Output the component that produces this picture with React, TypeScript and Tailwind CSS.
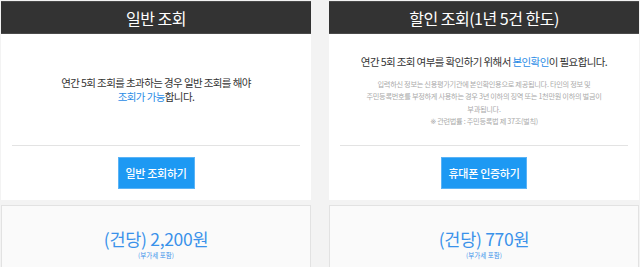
import React from 'react';

type Plan = {
  id: number;
  title: string;
  button: string;
  price: string;
  buttonWidth: string;
};

const plans: Plan[] = [
  { id: 1, title: '일반 조회', button: '일반 조회하기', price: '(건당) 2,200원', buttonWidth: 'w-[77px]' },
  { id: 2, title: '할인 조회(1년 5건 한도)', button: '휴대폰 인증하기', price: '(건당) 770원', buttonWidth: 'w-[86px]' },
];

const GeneralNotice = () => (
  <p className="text-center text-[10.5px] leading-[14px] tracking-[-0.6px] text-[#333]">
    연간 5회 조회를 초과하는 경우 일반 조회를 해야
    <br />
    <span className="text-[#2a8ce6]">조회가 가능</span>합니다.
  </p>
);

const DiscountNotice = () => (
  <div className="flex flex-col items-center pt-[4px] text-center">
    <p className="text-[10.5px] leading-[14px] tracking-[-0.6px] text-[#333]">
      연간 5회 조회 여부를 확인하기 위해서 <span className="text-[#2a8ce6]">본인확인</span>이 필요합니다.
    </p>
    <p className="mt-[9px] text-[7.2px] leading-[12.5px] tracking-[-0.3px] text-[#aaa]">
      입력하신 정보는 신용평가기관에 본인확인용으로 제공됩니다. 타인의 정보 및
      <br />
      주민등록번호를 부정하게 사용하는 경우 3년 이하의 징역 또는 1천만원 이하의 벌금이
      <br />
      부과됩니다.
      <br />
      <span className="font-['DejaVu_Sans',sans-serif] text-[#aaa]">※</span> 관련법률 : 주민등록법 제 37조(벌칙)
    </p>
  </div>
);

const PlanCard = ({ plan }: { plan: Plan }) => (
  <div className="flex flex-col">
    <div className="flex h-[33px] items-center justify-center border-y border-[#4a4a4a] bg-[#333]">
      <h2 className="text-[16px] font-normal tracking-[-0.5px] text-white">{plan.title}</h2>
    </div>
    <div className="bg-white px-[11px]">
      <div className="flex h-[112px] items-center justify-center border-b border-[#e3e3e3]">
        {plan.id === 1 ? <GeneralNotice /> : <DiscountNotice />}
      </div>
      <div className="flex justify-center py-[11px]">
        <button className={`h-[32px] ${plan.buttonWidth} border border-[#5ab3f6] bg-[#1d99f3] text-[11px] font-medium tracking-[-0.3px] text-white`}>
          {plan.button}
        </button>
      </div>
    </div>
    <div className="mt-[5px] h-[80px] border border-[#e2e2e2] bg-[#fafafa] pt-[20px] text-center">
      <div className="text-[17.5px] leading-[25px] tracking-[-0.3px] text-[#3a92ea]">{plan.price}</div>
      <div className="text-[6.5px] leading-[9px] text-[#3a92ea]">(부가세 포함)</div>
    </div>
  </div>
);

const App = () => (
  <div className="h-[267px] w-[640px] overflow-hidden bg-[#f3f3f3] pl-[1px] pt-[1px] font-['Noto_Sans_CJK_KR',sans-serif]">
    <div className="grid w-[638px] grid-cols-[310px_310px] gap-x-[18px]">
      {plans.map((plan) => (
        <PlanCard key={plan.id} plan={plan} />
      ))}
    </div>
  </div>
);

export default App;
